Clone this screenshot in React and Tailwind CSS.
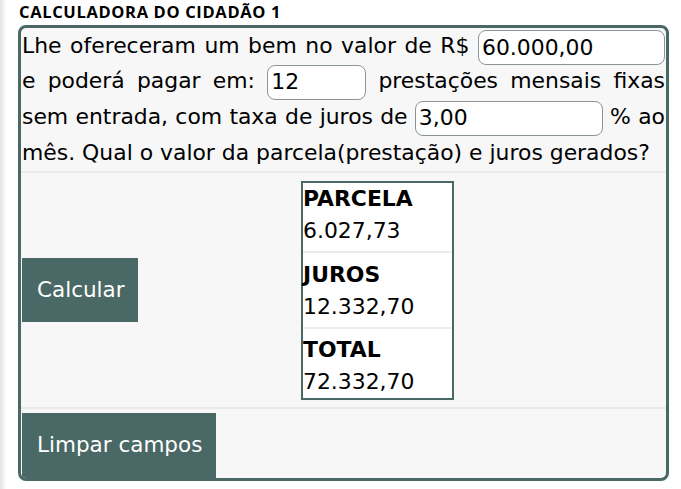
import React from "react";

const font = { fontFamily: '"DejaVu Sans", Verdana, sans-serif' };

function Field({ value, w }) {
  return (
    <input
      readOnly
      value={value}
      className={`inline-block h-[35px] ${w} rounded-[8px] border border-[#8a9695] bg-white px-[3px] align-middle text-[21.9px] text-black outline-none`}
      style={font}
    />
  );
}

export default function App() {
  return (
    <div className="flex min-h-[489px] bg-white">
      <div className="h-[489px] w-[6px] shrink-0 bg-gradient-to-r from-[#e2e2e2] to-white" />
      <div className="flex flex-col">
        <div className="ml-[13px] h-[25px] pt-[1px] text-[16.5px] font-bold leading-[22px] tracking-[0.65px] text-black [font-family:'Open_Sans',sans-serif]">
          CALCULADORA DO CIDADÃO 1
        </div>
        <div
          className="ml-[12px] h-[456px] w-[651px] overflow-hidden rounded-[8px] border-[3px] border-[#4a6866] bg-[#f7f7f7] text-[21.9px] text-black"
          style={font}
        >
          <div className="px-[1px]">
            <div className="h-[35px] leading-[35px] text-justify [text-align-last:justify]">
              Lhe ofereceram um bem no valor de R$ <Field value="60.000,00" w="w-[187px]" />
            </div>
            <div className="h-[36px] leading-[36px] text-justify [text-align-last:justify]">
              e poderá pagar em: <Field value="12" w="w-[99px]" /> prestações mensais fixas
            </div>
            <div className="h-[36px] leading-[36px] text-justify [text-align-last:justify]">
              sem entrada, com taxa de juros de <Field value="3,00" w="w-[188px]" /> % ao
            </div>
            <div className="h-[36px] leading-[36px]">
              mês. Qual o valor da parcela(prestação) e juros gerados?
            </div>
          </div>
          <div className="h-[2px] bg-[#eaeaea]" />
          <div className="flex h-[234px] items-center">
            <button className="ml-[1px] h-[64px] w-[116px] bg-[#4a6866] pl-[15px] text-left text-[21.5px] text-white" style={font}>
              Calcular
            </button>
            <div className="ml-[163px] w-[153px] border-2 border-[#4a6866] bg-white text-[21.9px] leading-[32px]">
              <div className="pb-[4px]">
                <div className="font-bold">PARCELA</div>
                <div>6.027,73</div>
              </div>
              <div className="h-[2px] bg-[#ececec]" />
              <div className="pb-[4px] pt-[6px]">
                <div className="font-bold">JUROS</div>
                <div>12.332,70</div>
              </div>
              <div className="h-[2px] bg-[#ececec]" />
              <div className="pt-[5px]">
                <div className="font-bold">TOTAL</div>
                <div>72.332,70</div>
              </div>
            </div>
          </div>
          <div className="h-[2px] bg-[#eaeaea]" />
          <div className="pl-[1px] pt-[4px]">
            <button className="h-[65px] w-[194px] bg-[#4a6866] pl-[15px] text-left text-[21.5px] text-white" style={font}>
              Limpar campos
            </button>
          </div>
        </div>
      </div>
    </div>
  );
}
